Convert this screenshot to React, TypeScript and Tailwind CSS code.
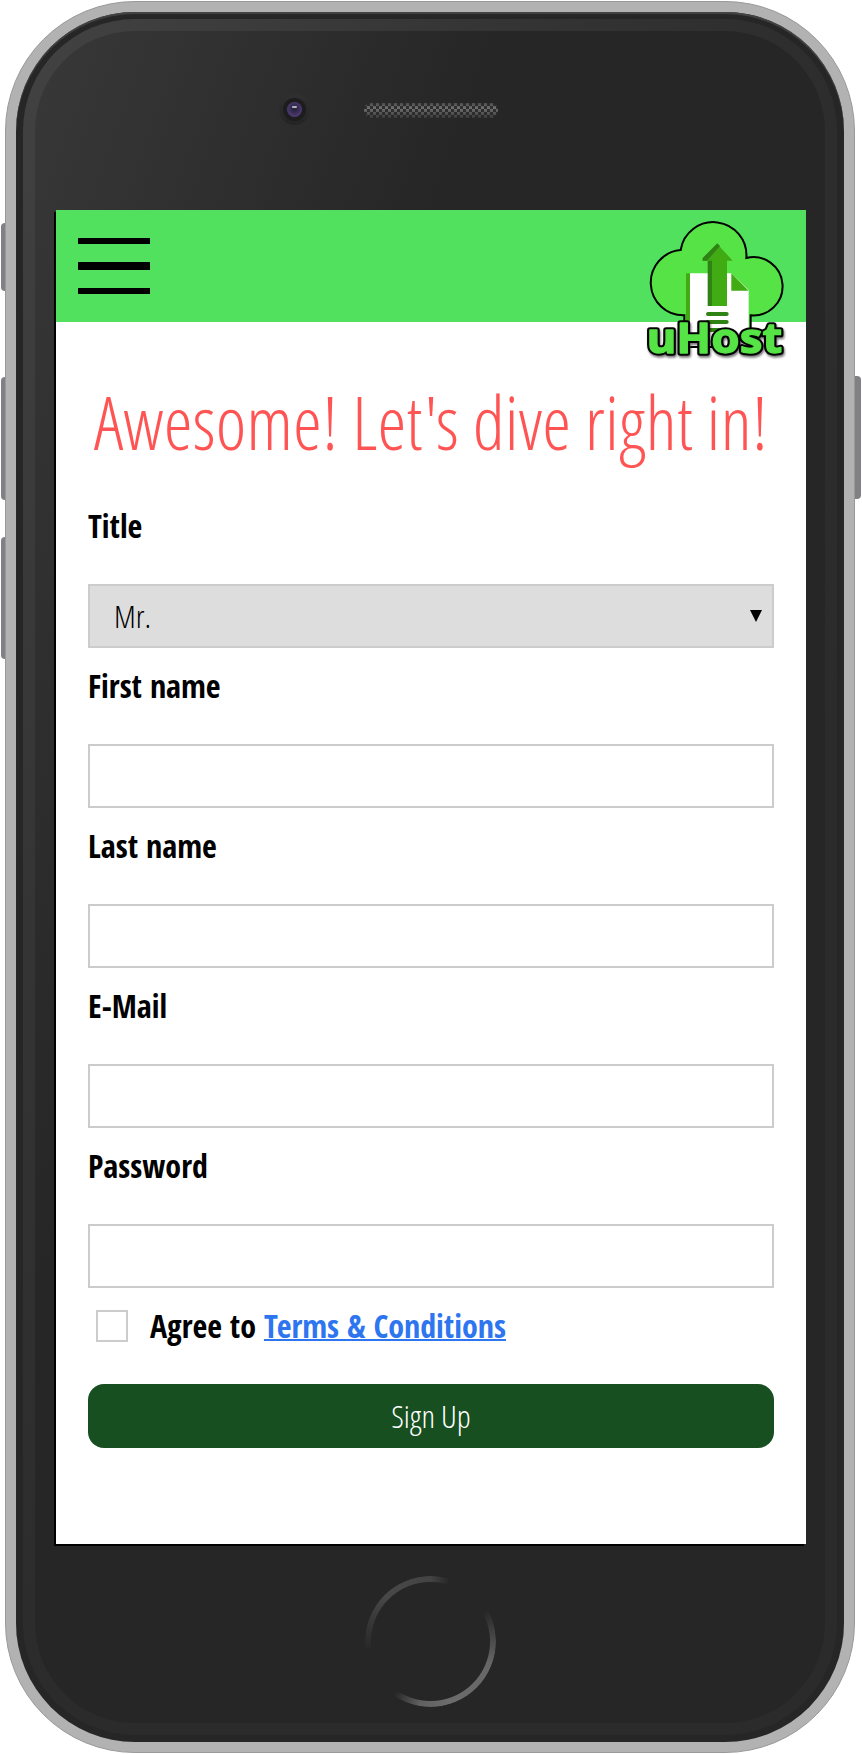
import React from "react";

function Logo() {
  return (
    <svg viewBox="45 54 420 426" className="absolute left-[589px] top-[8px] h-[142px] w-[140px] overflow-visible" aria-label="uHost">
      <path
        d="M163 443V348A98.2 98.2 0 0 1 152 152A99.3 99.3 0 0 1 349 176A87.5 87.5 0 1 1 362 348V443Z"
        transform="translate(0 -2)"
        fill="#56e346"
        stroke="#000"
        strokeWidth="6"
      />
      <path d="M168 220H184V440H168Z" fill="#41ab14" />
      <path d="M180 220H304L356 270V438H180Z" fill="#fff" />
      <path d="M304 220L356 272H304Z" fill="#41ab14" />
      <path d="M262 132L308 182H291V318H234V182H218V175Z" fill="#41ab14" />
      <path d="M262 130L270 138L231 182H218V174ZM233 182H246V318H233Z" fill="#2f8214" />
      <path d="M234 342H290M234 366H290M234 390H290" stroke="#2f8214" strokeWidth="12" strokeLinecap="round" />
      <g
        className="font-['Noto_Sans',sans-serif] font-bold [font-stretch:100%] [filter:drop-shadow(3px_6px_3px_#0008)]"
        fontSize="126"
        strokeLinejoin="round"
      >
        <text x="50" y="459" textLength="407" lengthAdjust="spacingAndGlyphs" fill="#000" stroke="#000" strokeWidth="16">
          uHost
        </text>
        <text x="50" y="459" textLength="407" lengthAdjust="spacingAndGlyphs" fill="#56e346" stroke="#56e346" strokeWidth="4">
          uHost
        </text>
      </g>
    </svg>
  );
}

function Camera() {
  return (
    <div className="ml-[244px] mt-[63px] flex size-[31px] items-center justify-center rounded-full bg-linear-to-b from-[#303030] to-[#242424]">
      <div className="flex size-[23px] items-center justify-center rounded-full bg-[#1d1d1f]">
        <div className="flex size-[15px] items-start justify-center rounded-full bg-[radial-gradient(circle_at_50%_45%,#2b2740_20%,#49366d_60%,#5b4a7d)] pt-1">
          <div className="h-[2px] w-[5px] rounded-full bg-[#b5b2be]" />
        </div>
      </div>
    </div>
  );
}

function Speaker() {
  return (
    <svg viewBox="0 0 134 15" className="ml-[54px] mt-[72px] h-[15px] w-[134px]">
      <defs>
        <pattern id="mesh" width="6" height="6" patternUnits="userSpaceOnUse">
          <rect width="6" height="6" fill="#303030" />
          <path d="M0 0h3v3H0zM3 3h3v3H3z" fill="#707070" />
        </pattern>
        <linearGradient id="mesh-shade" x2="0" y2="1">
          <stop offset="0" stopColor="#262626" stopOpacity=".5" />
          <stop offset=".35" stopColor="#262626" stopOpacity="0" />
          <stop offset="1" stopColor="#262626" stopOpacity=".75" />
        </linearGradient>
      </defs>
      <rect width="134" height="15" rx="7.5" fill="url(#mesh)" />
      <rect width="134" height="15" rx="7.5" fill="url(#mesh-shade)" />
    </svg>
  );
}

const fields = ["First name", "Last name", "E-Mail", "Password"];

function Screen() {
  return (
    <div className="relative ml-[21px] h-[1334px] w-[750px] bg-white text-black shadow-[-2px_2px_0_#000] [font-stretch:75%]">
      <header className="flex h-[112px] items-center bg-[#52e15f] pl-[22px]">
        <button aria-label="Menu" className="flex w-[72px] flex-col gap-[18px]">
          <span className="h-[6px] bg-black" />
          <span className="h-[8px] bg-black" />
          <span className="h-[6px] bg-black" />
        </button>
      </header>
      <Logo />
      <h1 className="mt-[46px] h-[110px] whitespace-nowrap text-center font-['Open_Sans_Condensed_Light','Open_Sans_Condensed','Open_Sans',sans-serif] text-[73.6px] leading-[108px] font-light text-[#ff5454]">
        Awesome! Let's dive right in!
      </h1>
      <form className="flex flex-col px-8 pt-[26px] text-[32px] leading-[44px]">
        <label className="mb-[36px] font-bold">Title</label>
        <div className="flex h-16 items-center justify-between border-2 border-[#ccc] bg-[#ddd] pr-[10px] pl-6 font-['Open_Sans_Condensed_Light','Open_Sans_Condensed','Open_Sans',sans-serif] font-light">
          <span>Mr.</span>
          <svg viewBox="0 0 12 12" className="size-3">
            <path d="M0 0H12L6 12Z" />
          </svg>
        </div>
        {fields.map((name) => (
          <div key={name} className="flex flex-col pt-4">
            <label className="mb-[36px] font-bold">{name}</label>
            <input aria-label={name} className="h-16 border-2 border-[#ccc] bg-white px-6 outline-none" />
          </div>
        ))}
        <div className="mt-[16px] flex h-[44px] items-center pl-2 font-bold">
          <input type="checkbox" aria-label="Agree" className="mr-[22px] size-8 appearance-none border-2 border-[#ccc] bg-white" />
          <span className="whitespace-pre">Agree to </span>
          <a className="text-[#2e76f0] underline decoration-2">Terms &amp; Conditions</a>
        </div>
        <button
          type="button"
          className="mt-[36px] h-16 rounded-2xl bg-[#174f20] font-['Open_Sans_Condensed_Light','Open_Sans_Condensed','Open_Sans',sans-serif] font-light text-white"
        >
          Sign Up
        </button>
      </form>
    </div>
  );
}

export default function App() {
  return (
    <main className="relative h-[1754px] w-[862px] overflow-hidden bg-white pt-px pl-[5px] font-['Open_Sans_Condensed','Open_Sans',sans-serif]">
      <div className="absolute top-[223px] left-[1px] h-[68px] w-2 rounded-l bg-[#808085]" />
      <div className="absolute top-[377px] left-[1px] h-[123px] w-2 rounded-l bg-[#808085]" />
      <div className="absolute top-[537px] left-[1px] h-[122px] w-2 rounded-l bg-[#808085]" />
      <div className="absolute top-[376px] left-[852px] h-[123px] w-[9px] rounded-r bg-[#808085]" />
      <div className="relative h-[1752px] w-[850px] rounded-[130px] border border-[#999] bg-[#b2b2b2] p-[10px]">
        <div className="h-[1730px] w-[828px] rounded-[119px] bg-[#262626] p-[7px] shadow-[inset_0_2px_1px_#444]">
          <div className="h-[1716px] w-[814px] rounded-[112px] bg-[radial-gradient(ellipse_900px_1700px_at_0_0,#424242,#353535_50%,#2b2b2b)] p-[12px]">
            <div className="h-[1692px] w-[790px] rounded-[100px] bg-[#262626] bg-[linear-gradient(110deg,#383838,#262626_33%)]">
              <div className="flex h-[179px]">
                <Camera />
                <Speaker />
              </div>
              <Screen />
              <div className="flex justify-center pt-[32px]">
                <div className="size-[131px] rounded-full bg-[conic-gradient(#444_0deg,transparent_18deg,transparent_60deg,#666_110deg,#6c6c6c_165deg,#606060_190deg,transparent_215deg,transparent_260deg,#484848_315deg,#444_360deg)] [mask:radial-gradient(circle,transparent_59px,#000_60px)]" />
              </div>
            </div>
          </div>
        </div>
      </div>
    </main>
  );
}
